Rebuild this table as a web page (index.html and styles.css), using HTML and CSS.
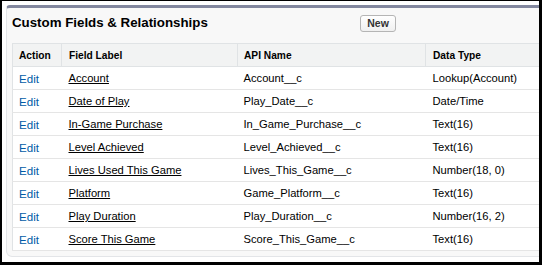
FILE: index.html
```html
<!DOCTYPE html>
<html>
<head>
<meta charset="utf-8">
<link rel="stylesheet" href="styles.css">
</head>
<body>
<div class="frame">
  <div class="panel">
    <div class="panel-head">
      <h2 class="title">Custom Fields &amp; Relationships</h2>
      <button class="btn">New</button>
    </div>
    <table class="list">
      <colgroup>
        <col class="c-action"><col class="c-label"><col class="c-api"><col class="c-type">
      </colgroup>
      <thead>
        <tr><th>Action</th><th class="wide">Field Label</th><th>API Name</th><th class="wide">Data Type</th></tr>
      </thead>
      <tbody>
        <tr><td><a class="edit">Edit</a></td><td class="wide"><a class="lbl">Account</a></td><td>Account__c</td><td class="wide">Lookup(Account)</td></tr>
        <tr><td><a class="edit">Edit</a></td><td class="wide"><a class="lbl">Date of Play</a></td><td>Play_Date__c</td><td class="wide">Date/Time</td></tr>
        <tr><td><a class="edit">Edit</a></td><td class="wide"><a class="lbl">In-Game Purchase</a></td><td>In_Game_Purchase__c</td><td class="wide">Text(16)</td></tr>
        <tr><td><a class="edit">Edit</a></td><td class="wide"><a class="lbl">Level Achieved</a></td><td>Level_Achieved__c</td><td class="wide">Text(16)</td></tr>
        <tr><td><a class="edit">Edit</a></td><td class="wide"><a class="lbl">Lives Used This Game</a></td><td>Lives_This_Game__c</td><td class="wide">Number(18, 0)</td></tr>
        <tr><td><a class="edit">Edit</a></td><td class="wide"><a class="lbl">Platform</a></td><td>Game_Platform__c</td><td class="wide">Text(16)</td></tr>
        <tr><td><a class="edit">Edit</a></td><td class="wide"><a class="lbl">Play Duration</a></td><td>Play_Duration__c</td><td class="wide">Number(16, 2)</td></tr>
        <tr><td><a class="edit">Edit</a></td><td class="wide"><a class="lbl">Score This Game</a></td><td>Score_This_Game__c</td><td class="wide">Text(16)</td></tr>
      </tbody>
    </table>
  </div>
</div>
</body>
</html>
```

FILE: styles.css
```css
html, body {
  margin: 0;
  padding: 0;
  background: #fff;
}
body {
  font-family: "Liberation Sans", Arial, sans-serif;
  color: #000;
}
.frame {
  box-sizing: border-box;
  width: 542px;
  height: 265px;
  border: 2px solid #000;
  border-top-width: 1px;
  border-right-width: 3px;
  border-bottom-width: 3px;
  overflow: hidden;
  padding: 4px 0 0 4px;
  background: #fff;
}
.panel {
  box-sizing: border-box;
  width: 560px;
  height: 252px;
  background: #f8f8f8;
  border: 1px solid #e3e5e8;
  border-top: 3px solid #82879e;
  border-radius: 4px 0 0 6px;
  padding: 0 0 0 5px;
}
.panel-head {
  display: flex;
  align-items: center;
  height: 29px;
}
.title {
  margin: 0;
  font-size: 13.3px;
  font-weight: bold;
  width: 348px;
}
.btn {
  font-family: "Liberation Sans", Arial, sans-serif;
  font-size: 10.5px;
  font-weight: bold;
  color: #333;
  background: linear-gradient(#fff, #f0f0f0);
  border: 1px solid #b5b5b5;
  border-radius: 3px;
  height: 17px;
  width: 36px;
  padding: 0;
  margin-top: 1px;
}
.list {
  margin-top: 6px;
  border-collapse: collapse;
  background: #fff;
  border: 1px solid #e0e3e5;
  width: 548px;
  table-layout: fixed;
}
.c-action { width: 49px; }
.c-label { width: 176px; }
.c-api { width: 188px; }
.list th {
  box-sizing: border-box;
  background: #f2f3f3;
  font-size: 10.2px;
  font-weight: bold;
  text-align: left;
  height: 23px;
  padding: 0 0 0 6px;
  border: 1px solid #e0e3e5;
}
.list td {
  box-sizing: border-box;
  font-size: 11.2px;
  height: 23px;
  padding: 0 0 0 6px;
  border-bottom: 1px solid #e5e5e5;
  white-space: nowrap;
}
.list .wide {
  padding-left: 7px;
}
.edit {
  color: #015ba7;
  font-size: 11.6px;
}
.lbl {
  color: #000;
  text-decoration: underline;
}
```
